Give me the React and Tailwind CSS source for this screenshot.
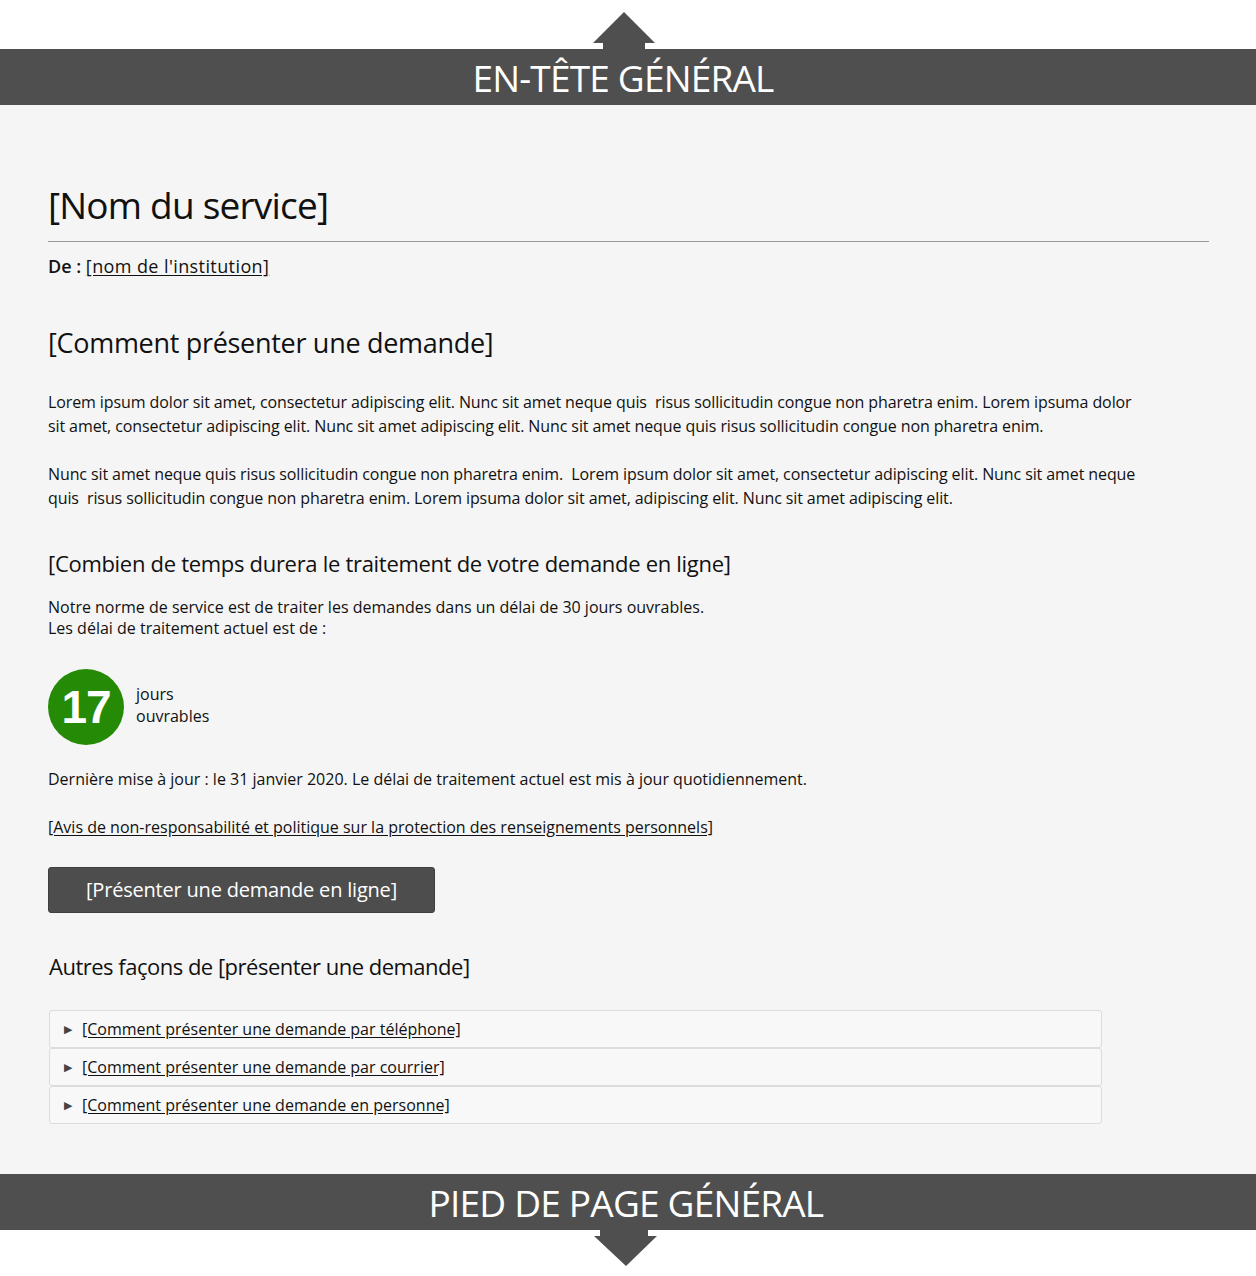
import React from 'react';

const font = { fontFamily: '"Open Sans", "Noto Sans", sans-serif' };

function Banner({ label, arrow, textPad }) {
  return (
    <div className="relative">
      {arrow === 'up' && (
        <div className="flex h-[49px] items-end justify-center bg-white pr-[8px]">
          <svg width="62" height="37" viewBox="0 0 62 37">
            <polygon points="31,0 62,31 52,31 52,37 10,37 10,31 0,31" fill="#4f4f4f" />
          </svg>
        </div>
      )}
      <div className={`flex h-[56px] items-center justify-center bg-[#4f4f4f] ${textPad}`}>
        <span className="text-[37px] leading-none tracking-[-0.8px] text-white">{label}</span>
      </div>
      {arrow === 'down' && (
        <div className="flex h-[46px] justify-center bg-white pr-[6px]">
          <svg width="63" height="36" viewBox="0 0 63 36">
            <polygon points="6,0 54,0 54,6 63,6 32,36 0,6 6,6" fill="#4f4f4f" />
          </svg>
        </div>
      )}
    </div>
  );
}

const accordionItems = [
  '[Comment présenter une demande par téléphone]',
  '[Comment présenter une demande par courrier]',
  '[Comment présenter une demande en personne]',
];

export default function App() {
  return (
    <div className="w-[1256px] bg-white text-[#111]" style={font}>
      <Banner label="EN-TÊTE GÉNÉRAL" arrow="up" textPad="pr-[10px]" />

      <main className="bg-[#f5f5f5] px-[48px] pt-[78px] pb-[50px]">
        <h1 className="text-[37px] leading-[44px] tracking-[-0.8px]">[Nom du service]</h1>
        <hr className="mt-[14px] mr-[-1px] border-t border-[#999]" />
        <p className="mt-[12px] text-[18px] leading-[24px]">
          <span className="font-semibold">De : </span>
          <a href="#" className="tracking-[0.4px] underline underline-offset-2">[nom de l'institution]</a>
        </p>

        <h2 className="mt-[47px] text-[27px] leading-[36px] tracking-[-0.3px]">[Comment présenter une demande]</h2>

        <div className="mt-[29px] text-[16px] leading-[24px] tracking-[-0.1px]">
          <p>
            Lorem ipsum dolor sit amet, consectetur adipiscing elit. Nunc sit amet neque quis&nbsp; risus sollicitudin congue non pharetra enim. Lorem ipsuma dolor
            <br />
            sit amet, consectetur adipiscing elit. Nunc sit amet adipiscing elit. Nunc sit amet neque quis risus sollicitudin congue non pharetra enim.
          </p>
          <p className="mt-[24px]">
            Nunc sit amet neque quis risus sollicitudin congue non pharetra enim.&nbsp; Lorem ipsum dolor sit amet, consectetur adipiscing elit. Nunc sit amet neque
            <br />
            quis&nbsp; risus sollicitudin congue non pharetra enim. Lorem ipsuma dolor sit amet, adipiscing elit. Nunc sit amet adipiscing elit.
          </p>
        </div>

        <h3 className="mt-[37px] text-[22px] leading-[32px] tracking-[-0.3px]">
          [Combien de temps durera le traitement de votre demande en ligne]
        </h3>
        <p className="mt-[18px] text-[16px] leading-[21px]">
          Notre norme de service est de traiter les demandes dans un délai de 30 jours ouvrables.
          <br />
          Les délai de traitement actuel est de :
        </p>

        <div className="mt-[30px] flex items-center gap-[12px]">
          <div className="flex h-[76px] w-[76px] items-center justify-center rounded-full bg-[#258a06]">
            <span className="text-[46px] font-bold leading-none tracking-[-1px] text-white" style={{ fontFamily: '"Liberation Sans", Arial, sans-serif' }}>17</span>
          </div>
          <div className="pb-[4px] text-[16px] leading-[22px]">
            jours
            <br />
            ouvrables
          </div>
        </div>

        <p className="mt-[22px] text-[16px] leading-[24px]">
          Dernière mise à jour : le 31 janvier 2020. Le délai de traitement actuel est mis à jour quotidiennement.
        </p>
        <p className="mt-[24px] text-[16px] leading-[24px]">
          <a href="#" className="underline underline-offset-2">[Avis de non-responsabilité et politique sur la protection des renseignements personnels]</a>
        </p>

        <button className="mt-[28px] flex h-[46px] w-[387px] items-center justify-center rounded-[3px] border border-[#3f3f3f] bg-[#4d4d4d] text-[20px] tracking-[-0.2px] text-white">
          [Présenter une demande en ligne]
        </button>

        <h3 className="mt-[37px] pl-[1px] text-[22px] leading-[32px] tracking-[-0.5px]">Autres façons de [présenter une demande]</h3>

        <div className="mt-[28px] ml-[1px] w-[1053px]">
          {accordionItems.map((item) => (
            <div key={item} className="flex h-[38px] items-center rounded-[3px] border border-[#dcdcdc] bg-[#f8f8f8] pl-[14px] text-[16px]">
              <span className="mr-[10px] text-[11px] text-[#444]">▶</span>
              <a href="#" className="underline underline-offset-2">{item}</a>
            </div>
          ))}
        </div>
      </main>

      <Banner label="PIED DE PAGE GÉNÉRAL" arrow="down" textPad="pr-[4px]" />
    </div>
  );
}
